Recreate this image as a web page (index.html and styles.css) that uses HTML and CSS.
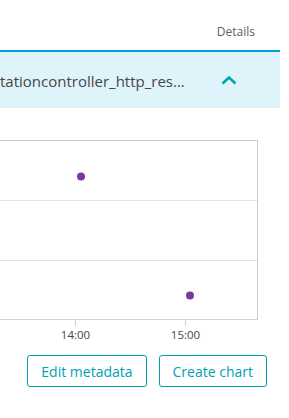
FILE: index.html
```html
<!DOCTYPE html>
<html>
  <head>
    <meta charset="UTF-8">
    <title>Metric details</title>
    <link rel="stylesheet" href="styles.css">
  </head>
  <body>
    <div class="head">
      <span class="head-label">Details</span>
    </div>
    <div class="metric-row">
      <span class="metric-name">tationcontroller_http_res...</span>
      <svg class="chevron" width="16" height="10" viewBox="0 0 16 10">
        <path d="M1.5 8.5 L8 2.5 L14.5 8.5" fill="none" stroke="#00a1b2" stroke-width="2.6"/>
      </svg>
    </div>
    <svg class="chart" width="289" height="247" viewBox="0 0 289 247">
      <line x1="0" y1="32.5" x2="257" y2="32.5" stroke="#cccccc"/>
      <line x1="0" y1="92.5" x2="257" y2="92.5" stroke="#e2e2e2"/>
      <line x1="0" y1="152.5" x2="257" y2="152.5" stroke="#e2e2e2"/>
      <line x1="257.5" y1="32" x2="257.5" y2="211" stroke="#cccccc"/>
      <line x1="0" y1="211.5" x2="258" y2="211.5" stroke="#cdd1dc"/>
      <line x1="75.5" y1="211" x2="75.5" y2="218" stroke="#cdd1dc"/>
      <line x1="185.5" y1="211" x2="185.5" y2="218" stroke="#cdd1dc"/>
      <text class="tick" x="75.5" y="231" text-anchor="middle">14:00</text>
      <text class="tick" x="185.5" y="231" text-anchor="middle">15:00</text>
      <circle cx="81" cy="68.5" r="4" fill="#7c38a1"/>
      <circle cx="190" cy="187.5" r="4" fill="#7c38a1"/>
    </svg>
    <div class="actions">
      <button class="btn">Edit metadata</button>
      <button class="btn">Create chart</button>
    </div>
  </body>
</html>
```

FILE: styles.css
```css
body {
  margin: 0;
  width: 289px;
  overflow: hidden;
  font-family: "Open Sans", "Noto Sans", sans-serif;
  color: #454646;
  background: #fff;
}
.head {
  height: 50px;
  display: flex;
  align-items: center;
  justify-content: flex-end;
  padding-right: 34px;
}
.head-label {
  font-size: 12px;
  color: #5e5e5e;
  margin-top: 12px;
}
.metric-row {
  width: 280px;
  height: 56px;
  border-top: 2px solid #00a1e0;
  background: #dff3fa;
  display: flex;
  align-items: center;
  justify-content: space-between;
}
.metric-name {
  font-size: 15px;
  white-space: nowrap;
  margin-top: 2px;
}
.chevron {
  margin-right: 43px;
}
.chart {
  display: block;
}
.tick {
  font-family: "Open Sans", "Noto Sans", sans-serif;
  font-size: 11.5px;
  fill: #454646;
}
.actions {
  display: flex;
  justify-content: flex-end;
  gap: 12px;
  padding-right: 22px;
}
.btn {
  height: 32px;
  padding: 0 13px;
  border: 1px solid #00a1b2;
  border-radius: 3px;
  background: #fff;
  color: #00a1b2;
  font-family: "Open Sans", "Noto Sans", sans-serif;
  font-size: 14px;
  cursor: pointer;
}
```
